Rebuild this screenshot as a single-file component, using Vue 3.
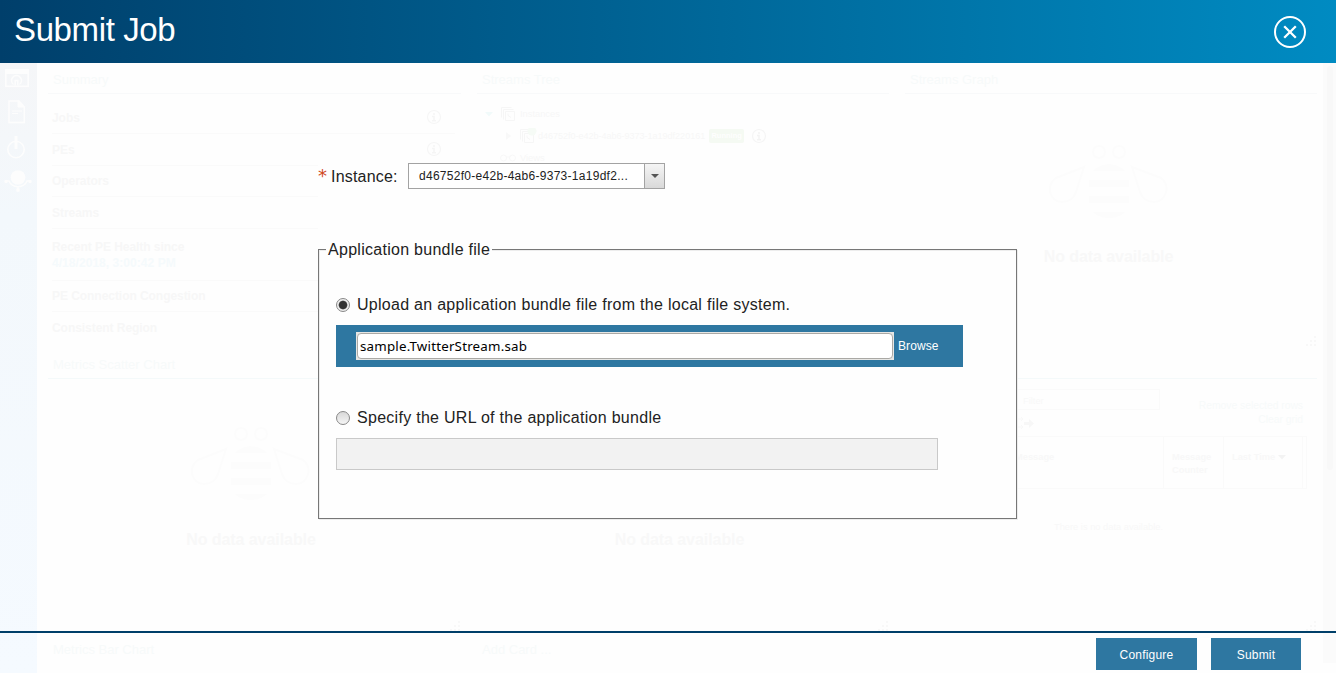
<script setup>
const facts = [
  { label: 'Jobs', info: true, h: 32 },
  { label: 'PEs', info: true, h: 32 },
  { label: 'Operators', h: 31 },
  { label: 'Streams', h: 32 },
  { label: 'Recent PE Health since', sub: '4/18/2018, 3:00:42 PM', h: 52 },
  { label: 'PE Connection Congestion', h: 31 },
  { label: 'Consistent Region', h: 31 },
]
</script>

<template>
  <div class="screen">
    <div class="dashboard">
      <nav class="rail">
        <svg class="nav-icon" width="28" height="22" viewBox="0 0 28 22">
          <rect x="3.8" y="3" width="22.4" height="15.3" fill="none" stroke="#fdfdfd" stroke-width="1.6" />
          <rect x="3" y="1" width="24" height="5" fill="#fdfdfd" />
          <path d="M11.500 16.500a5 5 0 1 1 6 0M13.200 17.500v-5h2.600v5" fill="none" stroke="#fdfdfd" stroke-width="1.500" />
        </svg>
        <svg class="nav-icon" width="28" height="26" viewBox="0 0 28 26">
          <path d="M7 2h10l5.300 6v15.500H7z" fill="none" stroke="#fdfdfd" stroke-width="1.500" />
          <path d="M16 1.500v6.500h7zM10 12h10M10 14.500h6" fill="#fdfdfd" stroke="#fdfdfd" />
        </svg>
        <svg class="nav-icon" width="28" height="26" viewBox="0 0 28 26">
          <circle cx="14" cy="15.500" r="8.200" fill="none" stroke="#fdfdfd" stroke-width="1.600" />
          <path d="M14 2v13" stroke="#fdfdfd" stroke-width="3" />
        </svg>
        <svg class="nav-icon" width="30" height="24" viewBox="0 0 30 24">
          <circle cx="16" cy="8.500" r="7.300" fill="#fdfdfd" />
          <path d="M3 12h4c3 7.500 15 7.500 18 0h4M16 17v4" fill="none" stroke="#fdfdfd" stroke-width="1.500" />
          <circle cx="4" cy="12.500" r="1.700" fill="#fdfdfd" />
          <circle cx="28" cy="12.500" r="1.700" fill="#fdfdfd" />
          <circle cx="16" cy="21" r="1.900" fill="#fdfdfd" />
        </svg>
      </nav>

      <div class="cards">
        <section class="card">
          <h2>Summary</h2>
          <ul class="facts">
            <li v-for="f in facts" :key="f.label" :style="{ height: f.h + 'px' }">
              <span>{{ f.label }}<em v-if="f.sub">{{ f.sub }}</em></span>
              <svg v-if="f.info" width="16" height="16" viewBox="0 0 16 16">
                <circle cx="8" cy="8" r="6.500" fill="none" stroke="#f6f6f6" stroke-width="1.200" />
                <path d="M8 4v2M6 7.500h2v4M6 11.700h4" fill="none" stroke="#f5f5f5" stroke-width="1.500" />
              </svg>
            </li>
          </ul>
        </section>

        <section class="card">
          <h2>Streams Tree</h2>
          <div class="tree">
            <div class="node">
              <svg class="twist" width="8" height="5" viewBox="0 0 8 5"><path d="M0 0h8L4 4.500z" fill="#f1fafa" /></svg>
              <svg width="16" height="16" viewBox="0 0 16 16"><path d="M1.500 11.500V1.500h10M3.500 13.500V3.500h10M5.500 5.500h9v9h-9zM8 7.500v2l3 2" fill="none" stroke="#f6f6f6" /></svg>
              <span>Instances</span>
            </div>
            <div class="node child">
              <svg class="twist" width="5" height="8" viewBox="0 0 5 8"><path d="M0 0v8l5-4z" fill="#f8f8f8" /></svg>
              <svg width="18" height="16" viewBox="0 0 18 16"><path d="M1.500 11.500V1.500h10M3.500 13.500V3.500h10M5.500 5.500h9v9h-9zM8 7.500v2l3 2" fill="none" stroke="#f6f6f6" /><circle cx="13" cy="3" r="4.500" fill="#f6fbf6" /></svg>
              <span>d46752f0-e42b-4ab6-9373-1a19df220161</span>
              <b>Running</b>
              <svg width="16" height="16" viewBox="0 0 16 16">
                <circle cx="8" cy="8" r="6.500" fill="none" stroke="#f5f5f5" stroke-width="1.200" />
                <path d="M8 4v2M6 7.500h2v4M6 11.700h4" fill="none" stroke="#f3f3f3" stroke-width="1.500" />
              </svg>
            </div>
            <div class="node">
              <svg class="views" width="16" height="8" viewBox="0 0 16 8"><path d="M6 3h4" stroke="#f8f8f8" /><circle cx="3.500" cy="4" r="3" fill="none" stroke="#f8f8f8" /><circle cx="12.500" cy="4" r="3" fill="none" stroke="#f8f8f8" /></svg>
              <span>Views</span>
            </div>
          </div>
        </section>

        <section class="card">
          <h2>Streams Graph</h2>
          <div class="empty upper">
            <svg width="120" height="76" viewBox="0 0 120 76">
              <g fill="none" stroke="#fcfcfc" stroke-width="2">
                <circle cx="50" cy="8" r="6" /><circle cx="70" cy="8" r="6" />
                <path d="M35 23L7 34C-4 42 1 58 13 58c8 0 12-4 14-10zM83 23l29 11c10 8 5 24-7 24-8 0-12-4-14-10z" />
              </g>
              <path d="M44 27c8-9 24-9 32 0zM40 36h40v7H40zM40 52h40v7H40zM44 68h32c-8 8-24 8-32 0z" fill="#fcfcfc" />
            </svg>
            <p>No data available</p>
          </div>
          <svg class="grip" width="12" height="12" viewBox="0 0 12 12"><path d="M9 0h2v2H9zM5 4h2v2H5zM9 4h2v2H9zM1 8h2v2H1zM5 8h2v2H5zM9 8h2v2H9z" fill="#f8f8f8" /></svg>
        </section>

        <section v-for="n in 2" :key="n" class="card">
          <h2 class="blue">{{ n === 1 ? 'Metrics Scatter Chart' : '' }}</h2>
          <div class="empty">
            <svg width="120" height="76" viewBox="0 0 120 76">
              <g fill="none" stroke="#fcfcfc" stroke-width="2">
                <circle cx="50" cy="8" r="6" /><circle cx="70" cy="8" r="6" />
                <path d="M35 23L7 34C-4 42 1 58 13 58c8 0 12-4 14-10zM83 23l29 11c10 8 5 24-7 24-8 0-12-4-14-10z" />
              </g>
              <path d="M44 27c8-9 24-9 32 0zM40 36h40v7H40zM40 52h40v7H40zM44 68h32c-8 8-24 8-32 0z" fill="#fcfcfc" />
            </svg>
            <p>No data available</p>
          </div>
          <svg class="grip" width="12" height="12" viewBox="0 0 12 12"><path d="M9 0h2v2H9zM5 4h2v2H5zM9 4h2v2H9zM1 8h2v2H1zM5 8h2v2H5zM9 8h2v2H9z" fill="#f8f8f8" /></svg>
        </section>

        <section class="card">
          <h2 class="blue"></h2>
          <div class="log">
            <div class="log-tools">
              <div class="filter">Filter</div>
              <div class="log-links">Remove selected rows<br />Clear grid</div>
            </div>
            <svg class="wires" width="16" height="14" viewBox="0 0 16 14"><path d="M0 3h5M3 1l2 2-2 2M0 11h5M3 9l2 2-2 2" fill="none" stroke="#f8f8f8" /><path d="M6 6h5V3l5 4.500L11 12V9H6z" fill="#f7f7f7" /></svg>
            <div class="log-head">
              <span>Message</span><span>Message<br />Counter</span>
              <span>Last Time <svg width="8" height="5" viewBox="0 0 8 5"><path d="M0 0h8L4 4.500z" fill="#f3f3f3" /></svg></span><span></span>
            </div>
            <p>There is no data available.</p>
          </div>
          <svg class="grip" width="12" height="12" viewBox="0 0 12 12"><path d="M9 0h2v2H9zM5 4h2v2H5zM9 4h2v2H9zM1 8h2v2H1zM5 8h2v2H5zM9 8h2v2H9z" fill="#f8f8f8" /></svg>
        </section>

        <section class="card last"><h2>Metrics Bar Chart</h2></section>
        <section class="card last"><h2>Add Card ...</h2></section>
      </div>
      <div class="track"><div class="thumb"></div></div>
    </div>

    <div class="dialog">
      <header>
        <h1>Submit Job</h1>
        <svg class="close" width="34" height="34" viewBox="0 0 34 34">
          <circle cx="17" cy="17" r="15" fill="none" stroke="#fff" stroke-width="2" />
          <path d="M11.200 11.200l11.600 11.600M22.800 11.200l-11.600 11.600" stroke="#fff" stroke-width="2.300" />
        </svg>
      </header>

      <main>
        <form class="form">
          <div class="instance">
            <span class="star">*</span>
            <label>Instance:</label>
            <div class="select">
              <span>d46752f0-e42b-4ab6-9373-1a19df2...</span>
              <i><svg width="8" height="4" viewBox="0 0 8 4"><path d="M0 0h8L4 4z" fill="#555" /></svg></i>
            </div>
          </div>

          <fieldset>
            <legend>Application bundle file</legend>
            <div class="choice"><span class="radio on"></span><span>Upload an application bundle file from the local file system.</span></div>
            <div class="upload">
              <div class="file"><div>sample.TwitterStream.sab</div></div>
              <span>Browse</span>
            </div>
            <div class="choice second"><span class="radio"></span><span class="url-label">Specify the URL of the application bundle</span></div>
            <div class="url"></div>
          </fieldset>
        </form>
      </main>

      <footer>
        <div class="btn configure">Configure</div>
        <div class="btn submit">Submit</div>
      </footer>
    </div>
  </div>
</template>

<style>
html, body { overflow: hidden; background: #fefefe; }
</style>

<style scoped>
* { box-sizing: border-box; }
h1, h2, p, ul { margin: 0; padding: 0; font-weight: normal; }
svg { display: block; flex: none; }
.screen {
  position: relative; width: 1336px; height: 673px; overflow: hidden;
  font-family: "Liberation Sans", Arial, sans-serif; color: #222; background: #fefefe;
}

.dashboard { display: flex; height: 673px; padding-top: 63px; }
.rail {
  width: 37px; flex: none; padding: 5px 0 0 2px; display: flex; flex-direction: column; gap: 9px;
  background: linear-gradient(#f5f6f8, #f3f8fc 25%, #f5faff);
}
.cards {
  flex: none; width: 1286px; padding-left: 11px; display: grid; align-content: start;
  grid-template-columns: 413px 412px 412px; grid-template-rows: 285px 285px 40px; column-gap: 16px;
}
.card { position: relative; height: 285px; overflow: hidden; }
.card.last { height: 40px; }
.card h2 { height: 31px; padding: 9px 0 0 5px; font-size: 13px; line-height: 16px; color: #f7fafa; border-bottom: 1px solid #f8f9fa; }
.card h2.blue { border-color: #f4f9fa; }
.card.last h2 { border: 0; }
.grip { position: absolute; right: 0; bottom: 0; }

.facts { list-style: none; padding: 8px 6px 0 4px; font-size: 12px; font-weight: bold; color: #f7f7f7; }
.facts li { display: flex; align-items: center; justify-content: space-between; padding-right: 13px; border-bottom: 1px solid #fafafa; line-height: 16px; letter-spacing: -.05px; }
.facts li svg { margin-top: -2px; }
.facts li:last-child { border: 0; }
.facts em { display: block; font-style: normal; color: #f5fafc; letter-spacing: .05px; }

.tree { padding: 9px 0 0 8px; font-size: 9.300px; color: #f7f7f7; }
.node { height: 22px; display: flex; align-items: center; }
.node > svg + svg { margin-left: 7px; }
.node span { margin-left: 4px; }
.node.child { padding-left: 21px; font-size: 9px; }
.node.child svg:nth-child(2) { margin-left: 8px; }
.node.child span { margin-left: 1px; }
.node.child svg:last-child { margin-left: 7px; }
.node b { margin-left: 4px; width: 35px; height: 14px; border-radius: 2px; background: #f5faf3; color: #fefefe; font-size: 7.500px; line-height: 14px; text-align: center; }
.node .views { margin-left: 15px; }

.empty { display: flex; flex-direction: column; align-items: center; padding: 47px 7px 0 0; }
.empty p { margin-top: 28px; font-size: 16px; line-height: 20px; font-weight: bold; letter-spacing: -.06px; color: #f8f8f8; }
.empty.upper { padding: 50px 5px 0 0; }
.empty.upper p { margin-top: 27px; }

.log { padding: 10px 10px 0 0; font-size: 9.300px; color: #f8f8f8; }
.log-tools { display: flex; justify-content: space-between; height: 31px; }
.filter { width: 255px; height: 21px; padding-left: 117px; line-height: 22px; border: 1px solid #fafafa; }
.log-links { padding: 10px 4px 0 0; font-size: 10.300px; line-height: 14px; text-align: right; color: #f7fafa; white-space: nowrap; }
.wires { margin: -4px 0 0 113px; }
.log-head { display: grid; grid-template-columns: 258px 60px 79px 5px; margin-top: 6px; height: 53px; border: 1px solid #fafafa; font-weight: bold; line-height: 13px; }
.log-head span { padding: 14px 0 0 8px; border-right: 1px solid #fafafa; }
.log-head span:first-child { padding-left: 109px; }
.log-head span:last-child { border: 0; padding: 0; }
.log-head svg { display: inline-block; }
.log p { margin-top: 32px; padding-left: 149px; line-height: 12px; }

.track { width: 13px; height: 600px; background: #fbfbfb; padding: 3px 3px 0 4px; }
.thumb { height: 404px; border-radius: 3px; background: #f8f8f8; }

.dialog { position: absolute; inset: 0; display: flex; flex-direction: column; }
header {
  height: 63px; flex: none; display: flex; justify-content: space-between; align-items: flex-start;
  padding: 0 29px 0 14px; color: #fff; background: linear-gradient(90deg, #003f6b, #008bc2);
}
header h1 { font-size: 33px; line-height: 60px; letter-spacing: -.38px; }
.close { margin-top: 15px; }
main { flex: 1; padding-top: 100px; }
.form { width: 700px; margin-left: 318px; background: #fefefe; font-size: 16px; }
.instance { display: flex; height: 26px; align-items: center; }
.star { width: 13px; font: 18px/26px "DejaVu Sans", sans-serif; color: #d0491f; }
.instance label { width: 77px; padding-top: 2px; letter-spacing: .2px; }
.select { width: 257px; height: 26px; display: flex; justify-content: space-between; border: 1px solid #a3a3a3; background: #fff; font-size: 12px; line-height: 24px; letter-spacing: .28px; }
.select span { padding-left: 10px; }
.select i { width: 20px; border-left: 1px solid #a3a3a3; background: linear-gradient(#f5f5f5, #d9d9d9); display: flex; align-items: center; justify-content: center; }

fieldset {
  width: 699px; height: 279px; margin: 51px 0 0; padding: 0 17px; min-width: 0;
  border: 1px solid #777; box-shadow: 1px 1px 0 #ededed, inset 1px 1px 0 #ededed; letter-spacing: .28px;
}
legend { margin-left: -10px; padding: 0 2px; height: 19px; line-height: 19px; background: #fefefe; }
.choice { display: flex; align-items: center; height: 20px; margin-top: 36px; }
.choice > span:last-child { margin-left: 7px; white-space: nowrap; }
.radio { width: 14px; height: 14px; flex: none; border: 1px solid #888; border-radius: 50%; background: linear-gradient(#d8d8d8, #f5f5f5); }
.radio.on { background: radial-gradient(circle, #333 0 3.500px, #555 4px, #eee 4.800px); }
.upload { display: flex; align-items: center; width: 627px; height: 42px; margin-top: 10px; padding-left: 20px; background: #2e77a1; color: #fff; font-size: 12px; letter-spacing: .1px; }
.file { width: 538px; height: 28px; padding: 1px; margin-right: 4px; background: #e6e6e4; }
.file div { height: 26px; border: 1px solid #aaa9a5; border-radius: 4px; background: #fff; padding-left: 2px; font: 13.330px/24px "Noto Sans", sans-serif; letter-spacing: .2px; color: #000; }
.choice.second { margin-top: 41px; }
.url { width: 602px; height: 32px; margin-top: 10px; background: #f2f2f2; border: 1px solid #c9c9c9; }

footer { height: 42px; flex: none; display: flex; justify-content: flex-end; gap: 14px; padding: 5px 35px 0 0; border-top: 2px solid #003f69; }
.btn { height: 32px; background: #2e77a1; color: #fff; font-size: 12px; line-height: 34px; text-align: center; letter-spacing: .2px; }
.configure { width: 101px; }
.submit { width: 90px; }
</style>
